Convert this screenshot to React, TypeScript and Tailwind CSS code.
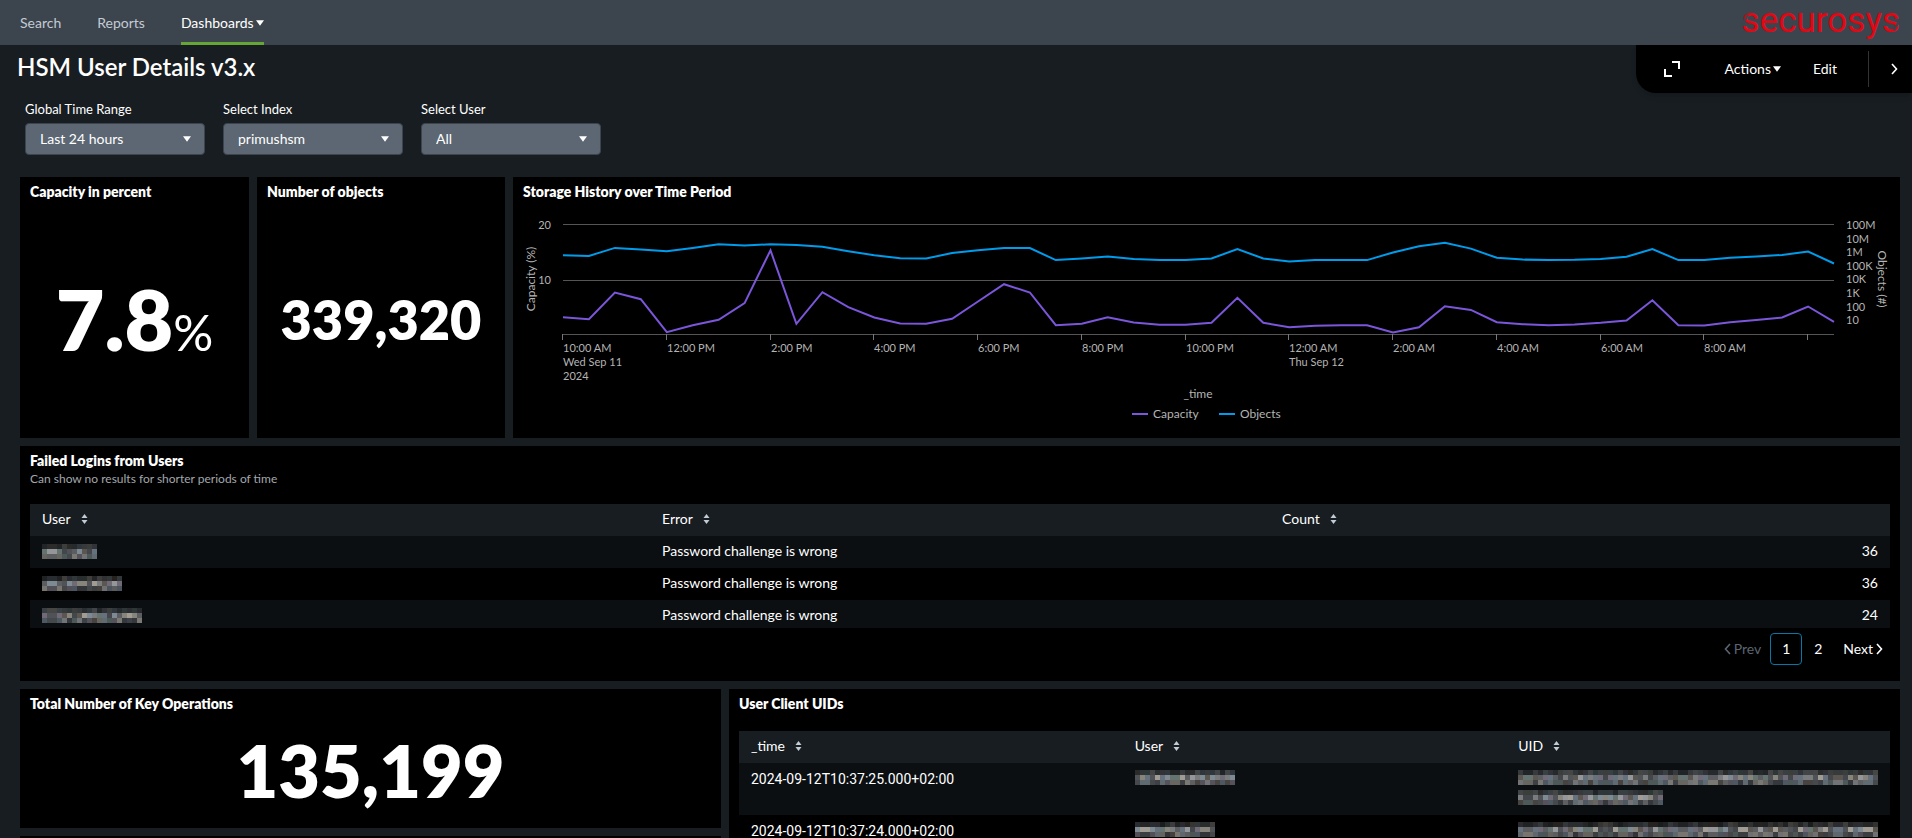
import { useState } from "react";
import type { ReactNode } from "react";

const CAPACITY = [
  3.15, 2.79, 7.64, 6.42, 0.42, 1.7, 2.67, 5.7, 15.3, 1.94, 7.7, 4.97, 3.09, 2.0, 1.94, 2.85, 6.0, 9.15, 7.64, 1.7,
  1.94, 3.15, 2.18, 1.76, 1.76, 2.12, 6.67, 2.12, 1.33, 1.58, 1.7, 1.7, 0.36, 1.33, 5.15, 4.48, 2.24, 1.88, 1.7, 1.82,
  2.12, 2.55, 6.24, 1.7, 1.64, 2.24, 2.61, 3.09, 5.09, 2.3,
];

// log10 of the object count
const OBJECTS = [
  5.77, 5.72, 6.3, 6.18, 6.06, 6.3, 6.57, 6.47, 6.57, 6.52, 6.38, 6.06, 5.77, 5.55, 5.53, 5.92, 6.13, 6.28, 6.28, 5.41,
  5.53, 5.67, 5.5, 5.41, 5.41, 5.53, 6.21, 5.53, 5.31, 5.41, 5.41, 5.41, 5.96, 6.42, 6.67, 6.25, 5.58, 5.45, 5.41, 5.43,
  5.5, 5.65, 6.21, 5.41, 5.41, 5.58, 5.67, 5.79, 6.04, 5.16,
];

const TIMES = [
  ["10:00 AM", "Wed Sep 11", "2024"], ["12:00 PM"], ["2:00 PM"], ["4:00 PM"], ["6:00 PM"], ["8:00 PM"],
  ["10:00 PM"], ["12:00 AM", "Thu Sep 12"], ["2:00 AM"], ["4:00 AM"], ["6:00 AM"], ["8:00 AM"], [],
];

const LEFT = 50;
const RIGHT = 1321;
const BASE = 127;
const HEIGHT = 110;
const stepX = (RIGHT - LEFT) / (CAPACITY.length - 1);
const toPoints = (data: number[], max: number) =>
  data.map((v, i) => `${(LEFT + i * stepX).toFixed(1)},${(BASE + 0.5 - (v / max) * HEIGHT).toFixed(1)}`).join(" ");

function StorageChart() {
  return (
    <svg viewBox="0 0 1387 231" className="block w-full text-[11px]" fill="#b4b4b4" role="img" aria-label="Storage History over Time Period">
      {[0, 56, 110].map((y) => (
        <rect key={y} x={LEFT} y={17 + y} width={RIGHT - LEFT} height="1" fill="#555555" />
      ))}
      {TIMES.map((lines, i) => {
        const x = Math.round(LEFT + i * 4 * stepX);
        return (
          <g key={i}>
            <rect x={x - 1} y={BASE} width="1" height="6" fill="#777777" />
            {lines.map((t, n) => <text key={t} x={x} y={145 + n * 14}>{t}</text>)}
          </g>
        );
      })}
      <text x="38" y="22" textAnchor="end">20</text>
      <text x="38" y="77" textAnchor="end">10</text>
      {["100M", "10M", "1M", "100K", "10K", "1K", "100", "10"].map((t, i) => (
        <text key={t} x="1333" y={Math.round(22 + i * 13.6)}>{t}</text>
      ))}
      <polyline points={toPoints(OBJECTS, 8)} fill="none" stroke="#009ceb" strokeWidth="2" />
      <polyline points={toPoints(CAPACITY, 20)} fill="none" stroke="#7b56db" strokeWidth="2" />
      <g className="text-xs">
        <text transform="translate(22 72) rotate(-90)" textAnchor="middle">Capacity (%)</text>
        <text transform="translate(1365 72) rotate(90)" textAnchor="middle">Objects (#)</text>
        <text x="685" y="191" textAnchor="middle">_time</text>
        <rect x="619" y="206" width="16" height="2" fill="#7b56db" />
        <text x="640" y="211">Capacity</text>
        <rect x="706" y="206" width="16" height="2" fill="#009ceb" />
        <text x="727" y="211">Objects</text>
      </g>
    </svg>
  );
}

const TONES = ["#5b5d60", "#7a7b7c", "#66717e", "#87847c", "#4f5357", "#95969a", "#6f6a76", "#647370", "#a09c94", "#5c5650", "#7d8a92", "#43464a"];

// Masked value: a block of 5px tiles, dimmer in the first line
function Redacted({ cols, lines = 3, seed }: { cols: number; lines?: number; seed: number }) {
  const tiles: ReactNode[] = [];
  for (let r = 0; r < lines; r++) {
    for (let c = 0; c < cols; c++) {
      const h = ((c + 3) * 7919 + (r + 1) * 104729 + seed * 1299709 + c * c * 31) % 997;
      tiles.push(
        <rect key={`${r}-${c}`} x={c * 5} y={r * 5} width="5" height="5" fill={TONES[h % 12]} opacity={r === 1 ? 1 : r === 0 ? 0.4 : 0.75} />
      );
    }
  }
  return (
    <svg width={cols * 5} height={lines * 5} className="block" shapeRendering="crispEdges" role="img" aria-label="hidden">
      {tiles}
    </svg>
  );
}

function Caret({ className = "" }: { className?: string }) {
  return (
    <svg width="8" height="6" viewBox="0 0 8 6" className={className} fill="#ffffff" aria-hidden="true">
      <path d="M0 0.3h8L4 5.8z" />
    </svg>
  );
}

function Chevron({ left = false }: { left?: boolean }) {
  return (
    <svg width="7" height="12" viewBox="0 0 7 12" fill="none" stroke="currentColor" strokeWidth="1.6" aria-hidden="true">
      <path d={left ? "M6 1 1.5 6 6 11" : "M1 1l4.5 5L1 11"} />
    </svg>
  );
}

function Panel({ title, sub, className = "", children }: { title: string; sub?: string; className?: string; children?: ReactNode }) {
  return (
    <section className={`flex flex-col bg-black ${className}`}>
      <h2 className="px-[10px] pt-[5px] text-sm leading-5 font-extrabold">{title}</h2>
      {sub && <p className="px-[10px] text-xs leading-4 text-[#a3a7ab]">{sub}</p>}
      {children}
    </section>
  );
}

function Th({ children }: { children: string }) {
  return (
    <th scope="col" className="h-8 w-1/3 px-3 pb-[2px] text-left font-normal">
      <button className="flex items-center gap-[10px]">
        {children}
        <svg width="7" height="10" viewBox="0 0 7 10" fill="#c3cbd4" aria-hidden="true">
          <path d="M3.5 0 6.5 4h-6zM0.5 6h6l-3 4z" />
        </svg>
      </button>
    </th>
  );
}

function Filter({ id, label, options }: { id: string; label: string; options: string[] }) {
  return (
    <div className="flex w-[180px] flex-col gap-1">
      <label htmlFor={id} className="text-[13px] leading-5">{label}</label>
      <div className="relative">
        <select id={id} className="block h-8 w-full appearance-none rounded-sm border border-[#3c444d] bg-[#5c6773] px-[14px] text-sm text-white">
          {options.map((o) => <option key={o}>{o}</option>)}
        </select>
        <Caret className="pointer-events-none absolute top-[13px] right-[14px]" />
      </div>
    </div>
  );
}

const FAILED = [
  { cols: 11, count: 36 },
  { cols: 16, count: 36 },
  { cols: 20, count: 24 },
];

export default function App() {
  const [page, setPage] = useState(1);
  return (
    <div className="flex h-screen flex-col overflow-hidden bg-[#171d21] font-[Lato,'Liberation_Sans',sans-serif] text-sm text-white">
      <header className="flex h-[45px] shrink-0 items-stretch justify-between bg-[#3c444d] pr-3 pl-5">
        <nav className="flex gap-9 text-[#c3cbd4]">
          <a href="#search" className="flex items-center">Search</a>
          <a href="#reports" className="flex items-center">Reports</a>
          <a href="#dashboards" className="flex items-center gap-[2px] border-b-[3px] border-[#65a637] pt-[3px] text-white">
            Dashboards <Caret />
          </a>
        </nav>
        <a href="#home" className="relative font-[Roboto,sans-serif] text-[35px] leading-[41px] text-[#e30613]">
          securosys
          <span className="absolute top-[14px] left-[2px] h-3 w-[2px] rotate-[30deg] bg-[#3c444d]" />
          <span className="absolute right-[2px] bottom-[14px] h-3 w-[2px] rotate-[30deg] bg-[#3c444d]" />
        </a>
      </header>

      <div className="flex shrink-0 items-start justify-between pl-[17px]">
        <h1 className="pt-[6px] text-2xl leading-8 font-semibold">HSM User Details v3.x</h1>
        <div className="flex h-12 items-center rounded-bl-[20px] bg-black pl-7 shadow-md">
          <button aria-label="Full screen">
            <svg width="16" height="16" viewBox="0 0 16 16" fill="none" stroke="#ffffff" strokeWidth="2">
              <path d="M8 1h7v7M1 8v7h7" />
            </svg>
          </button>
          <button className="ml-[45px] flex items-center gap-[2px]">Actions <Caret /></button>
          <button className="ml-8">Edit</button>
          <div className="ml-[31px] h-9 w-px bg-[#333333]" />
          <button aria-label="Collapse" className="pr-[14px] pl-[22px]"><Chevron /></button>
        </div>
      </div>

      <div className="flex shrink-0 gap-[18px] px-[25px] pt-[6px] pb-[22px]">
        <Filter id="range" label="Global Time Range" options={["Last 24 hours", "Last 7 days"]} />
        <Filter id="index" label="Select Index" options={["primushsm", "main"]} />
        <Filter id="user" label="Select User" options={["All"]} />
      </div>

      <main className="flex flex-col gap-2 pr-3 pl-5">
        <div className="grid grid-cols-[229fr_248fr_1387fr] gap-2">
          <Panel title="Capacity in percent">
            <div className="flex grow items-center justify-center pb-[2px] leading-none">
              <p><span className="text-[84px] font-extrabold">7.8</span><span className="text-[50px]">%</span></p>
            </div>
          </Panel>
          <Panel title="Number of objects">
            <p className="flex grow items-center justify-center text-[54px] leading-none font-extrabold">339,320</p>
          </Panel>
          <Panel title="Storage History over Time Period">
            <div className="pt-[5px]"><StorageChart /></div>
          </Panel>
        </div>

        <Panel title="Failed Logins from Users" sub="Can show no results for shorter periods of time" className="h-[235px] shrink-0">
          <div className="mx-[10px] mt-[17px] h-[124px] shrink-0 overflow-hidden">
            <table className="w-full table-fixed">
              <thead className="bg-[#171d21]">
                <tr><Th>User</Th><Th>Error</Th><Th>Count</Th></tr>
              </thead>
              <tbody>
                {FAILED.map((f, i) => (
                  <tr key={i} className="h-8 odd:bg-[#0b0f12]">
                    <td className="px-3 pb-[2px]"><Redacted cols={f.cols} seed={i + 1} /></td>
                    <td className="px-3 pb-[2px]">Password challenge is wrong</td>
                    <td className="px-3 pb-[2px] text-right">{f.count}</td>
                  </tr>
                ))}
              </tbody>
            </table>
          </div>
          <div className="flex items-center justify-end pt-[5px] pr-[17px]">
            <button disabled={page === 1} onClick={() => setPage(1)} className="mr-[9px] flex items-center gap-[3px] disabled:text-[#5c6570]">
              <Chevron left /> Prev
            </button>
            {[1, 2].map((n) => (
              <button key={n} onClick={() => setPage(n)} className={`size-8 rounded-sm border ${page === n ? "border-[#0877a6]" : "border-transparent"}`}>
                {n}
              </button>
            ))}
            <button onClick={() => setPage(2)} className="ml-[9px] flex items-center gap-[3px]">Next <Chevron /></button>
          </div>
        </Panel>

        <div className="grid grid-cols-[701fr_1171fr] gap-2">
          <div className="flex flex-col gap-2">
            <Panel title="Total Number of Key Operations" className="h-[139px] shrink-0">
              <p className="flex grow items-center justify-center pb-[2px] text-[72px] leading-none font-extrabold">135,199</p>
            </Panel>
            <div className="grow bg-black" />
          </div>
          <Panel title="User Client UIDs" className="h-[240px]">
            <div className="mx-[10px] mt-[17px]">
              <table className="w-full table-fixed">
                <thead className="bg-[#171d21]">
                  <tr><Th>_time</Th><Th>User</Th><Th>UID</Th></tr>
                </thead>
                <tbody>
                  {["2024-09-12T10:37:25.000+02:00", "2024-09-12T10:37:24.000+02:00"].map((t, i) => (
                    <tr key={t} className="h-[52px] align-top odd:bg-[#0b0f12]">
                      <td className="px-3 pt-[6px] font-[Roboto,sans-serif]">{t}</td>
                      <td className="px-3 pt-[7px]"><Redacted cols={i ? 16 : 20} seed={i + 5} /></td>
                      <td className="px-3 pt-[7px]">
                        <div className="flex flex-col gap-[5px] overflow-hidden">
                          <Redacted cols={72} seed={i + 8} />
                          <Redacted cols={29} seed={i + 11} />
                        </div>
                      </td>
                    </tr>
                  ))}
                </tbody>
              </table>
            </div>
          </Panel>
        </div>
      </main>
    </div>
  );
}
